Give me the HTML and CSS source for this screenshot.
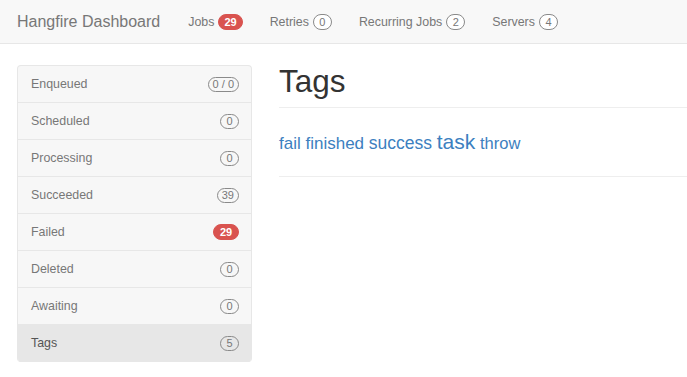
FILE: index.html
```html
<!DOCTYPE html>
<html>
<head>
<meta charset="utf-8">
<title>Hangfire Dashboard</title>
<link rel="stylesheet" href="styles.css">
</head>
<body>
<nav class="navbar">
  <a class="brand" href="#">Hangfire Dashboard</a>
  <ul class="nav">
    <li><a href="#">Jobs <span class="badge badge-danger">29</span></a></li>
    <li><a href="#">Retries <span class="badge">0</span></a></li>
    <li><a href="#">Recurring Jobs <span class="badge">2</span></a></li>
    <li><a href="#">Servers <span class="badge">4</span></a></li>
  </ul>
</nav>
<div class="layout">
  <aside class="sidebar">
    <a class="item" href="#"><span>Enqueued</span><span class="sbadge">0 / 0</span></a>
    <a class="item" href="#"><span>Scheduled</span><span class="sbadge">0</span></a>
    <a class="item" href="#"><span>Processing</span><span class="sbadge">0</span></a>
    <a class="item" href="#"><span>Succeeded</span><span class="sbadge">39</span></a>
    <a class="item" href="#"><span>Failed</span><span class="sbadge sbadge-danger">29</span></a>
    <a class="item" href="#"><span>Deleted</span><span class="sbadge">0</span></a>
    <a class="item" href="#"><span>Awaiting</span><span class="sbadge">0</span></a>
    <a class="item active" href="#"><span>Tags</span><span class="sbadge">5</span></a>
  </aside>
  <main class="main">
    <h1 class="page-header">Tags</h1>
    <div class="tags">
      <a href="#" class="tag t17">fail</a>
      <a href="#" class="tag t17">finished</a>
      <a href="#" class="tag t175">success</a>
      <a href="#" class="tag t21">task</a>
      <a href="#" class="tag t165">throw</a>
    </div>
  </main>
</div>
</body>
</html>
```
FILE: styles.css
```css
* { box-sizing: border-box; }
html, body { margin: 0; padding: 0; }
body {
  font-family: "Liberation Sans", Arial, sans-serif;
  font-size: 12.4px;
  color: #333;
  background: #fff;
  overflow: hidden;
}
a { text-decoration: none; }

.navbar {
  height: 44px;
  background: #f8f8f8;
  border-bottom: 1px solid #e7e7e7;
  display: flex;
  align-items: center;
  padding-left: 17px;
}
.brand {
  font-size: 16px;
  color: #777;
  margin-right: 28px;
  line-height: 20px;
}
.nav {
  list-style: none;
  margin: 0;
  padding: 0;
  display: flex;
  gap: 27px;
}
.nav a {
  color: #777;
  font-size: 12.4px;
  display: flex;
  align-items: center;
  gap: 4px;
}
.badge {
  display: inline-flex;
  align-items: center;
  justify-content: center;
  min-width: 19px;
  height: 16px;
  padding: 0 5px;
  border: 1px solid #8a8a8a;
  border-radius: 9px;
  font-size: 11px;
  color: #777;
  background: #fff;
}
.badge-danger {
  background: #d9534f;
  border-color: #d9534f;
  color: #fff;
  font-weight: bold;
  min-width: 24px;
}

.layout {
  display: flex;
  align-items: flex-start;
  padding: 21px 0 0 17px;
}
.sidebar {
  width: 235px;
  flex: none;
  border: 1px solid #e7e7e7;
  border-bottom: none;
  border-radius: 4px;
  overflow: hidden;
  background: #f7f7f7;
  margin-right: 27px;
}
.item {
  display: flex;
  align-items: center;
  justify-content: space-between;
  height: 37px;
  border-bottom: 1px solid #e7e7e7;
  padding: 0 12px 0 13px;
  color: #777;
  font-size: 12.4px;
}
.item.active {
  background: #e7e7e7;
  color: #555;
}
.sbadge {
  display: inline-flex;
  align-items: center;
  justify-content: center;
  min-width: 19px;
  height: 15px;
  padding: 0 4px;
  border: 1px solid #8a8a8a;
  border-radius: 8px;
  font-size: 11px;
  color: #777;
  background: transparent;
}
.sbadge-danger {
  background: #d9534f;
  border-color: #d9534f;
  color: #fff;
  font-weight: bold;
  min-width: 26px;
  height: 16px;
}

.main {
  flex: 1;
  min-width: 0;
}
.page-header {
  margin: 0;
  font-size: 31.5px;
  font-weight: normal;
  line-height: 33px;
  color: #333;
  padding-bottom: 9px;
  border-bottom: 1px solid #eee;
}
.tags {
  margin-top: 22px;
  padding-bottom: 20px;
  border-bottom: 1px solid #eee;
  line-height: 24px;
  font-size: 17px;
}
.tag { color: #3c80c0; }
.t17 { font-size: 17px; }
.t175 { font-size: 17.5px; }
.t21 { font-size: 21px; }
.t165 { font-size: 16.5px; }
```
